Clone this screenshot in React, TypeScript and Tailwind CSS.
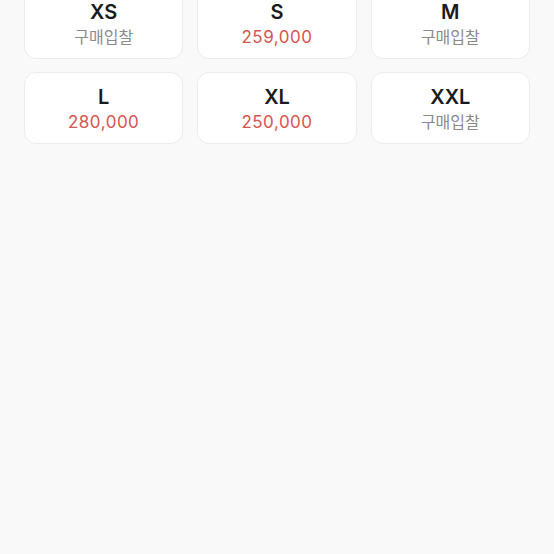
const sizes = [
  { label: 'XS', price: null },
  { label: 'S', price: '259,000' },
  { label: 'M', price: null },
  { label: 'L', price: '280,000' },
  { label: 'XL', price: '250,000' },
  { label: 'XXL', price: null },
]

export default function App() {
  return (
    <div className="min-h-[554px] overflow-hidden bg-[#f9f9f9] font-['Inter','Noto_Sans_CJK_KR',sans-serif]">
      <div className="-mt-[13px] grid grid-cols-3 gap-x-[14px] gap-y-[13px] px-[24px]">
        {sizes.map((size) => (
          <div
            key={size.label}
            className="flex h-[72px] flex-col items-center justify-center rounded-[12px] border border-[#ececec] bg-white pt-[3px]"
          >
            <span className="text-[20px] font-semibold leading-[24px] text-[#1a1a1a]">
              {size.label}
            </span>
            <span className="mt-[1px]">
              {size.price ? (
                <span className="text-[17px] leading-[24px] tracking-[0.03em] text-[#d4564f]">
                  {size.price}
                </span>
              ) : (
                <span className="text-[16px] leading-[24px] text-[#8a8a8a]">구매입찰</span>
              )}
            </span>
          </div>
        ))}
      </div>
    </div>
  )
}
